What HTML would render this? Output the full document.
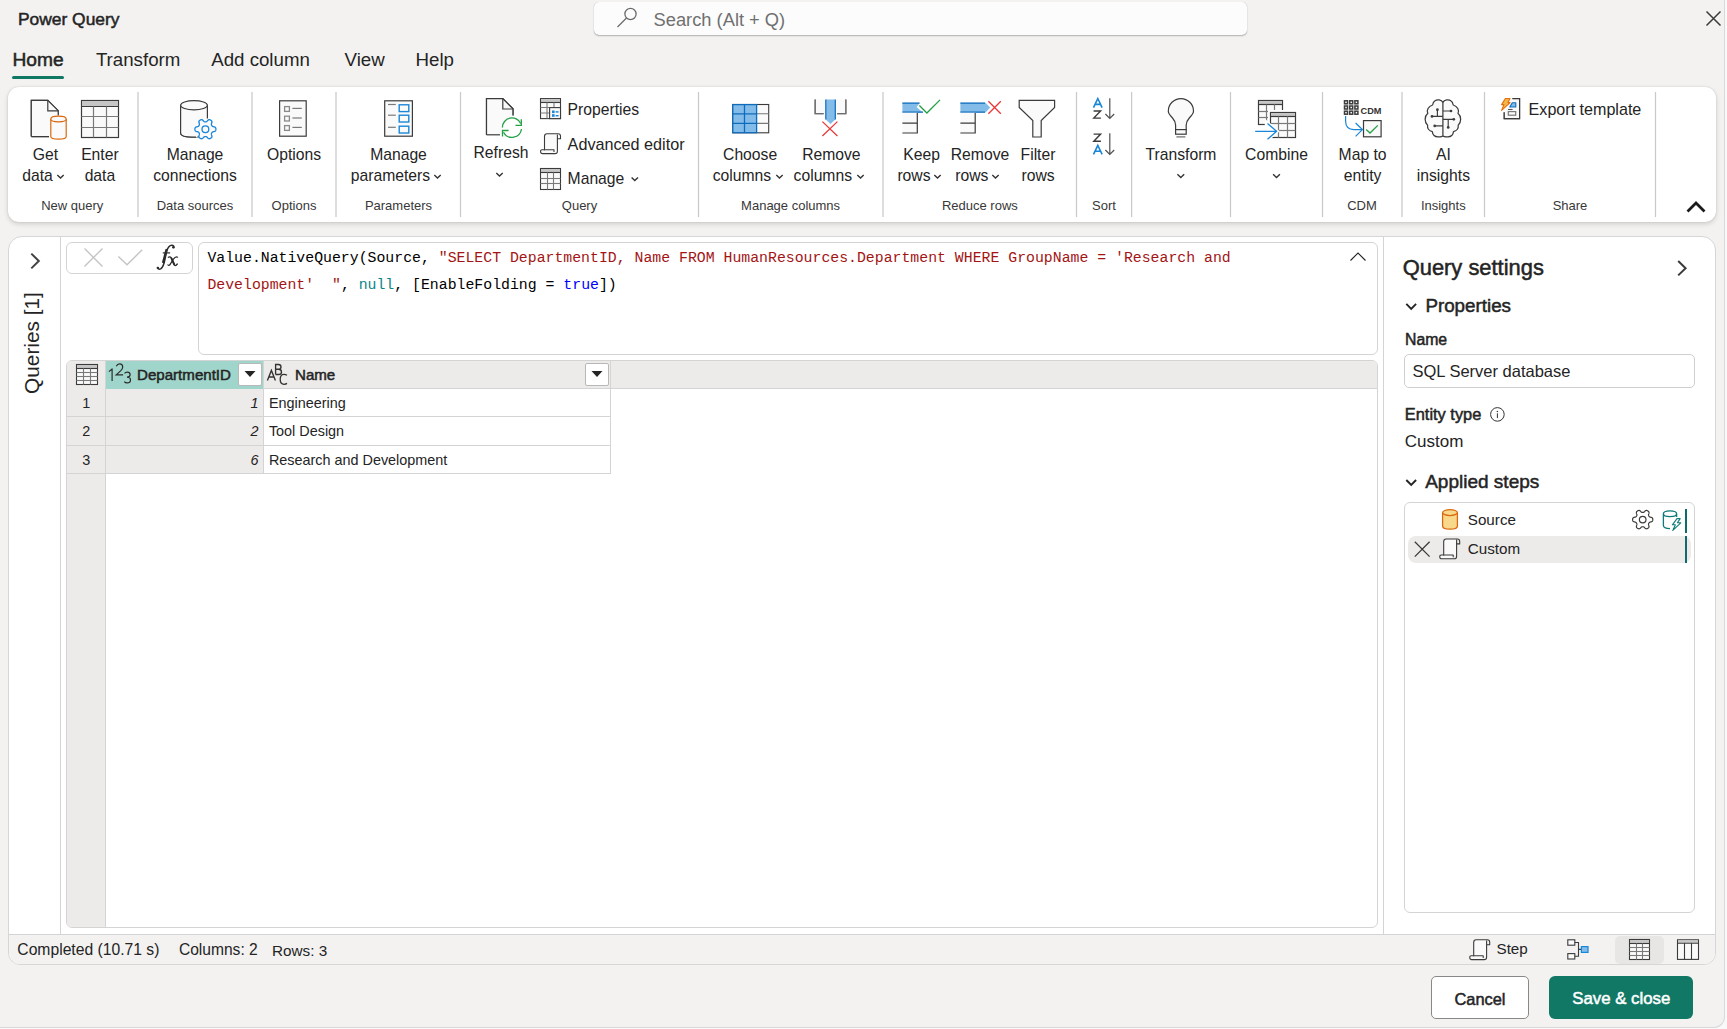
<!DOCTYPE html>
<html><head><meta charset="utf-8"><title>Power Query</title>
<style>
html,body{margin:0;padding:0;}
body{width:1727px;height:1029px;overflow:hidden;position:relative;background:#f3f2f1;font-family:'Liberation Sans', sans-serif;}
.t{position:absolute;white-space:nowrap;line-height:0;}
svg.ov{position:absolute;left:0;top:0;}
</style></head><body>
<div style="position:absolute;left:0px;top:0px;width:1727px;height:1029px;box-sizing:border-box;background:#f9f9f9"></div>
<div style="position:absolute;left:-20px;top:-20px;width:1745px;height:1048px;box-sizing:border-box;background:#f3f2f1;border-right:1px solid #d9d9d9;border-bottom:1px solid #d9d9d9;border-radius:0 0 11px 0"></div>
<div class="t" style="left:18.00px;top:19.07px;font-size:17.4px;font-weight:400;color:#242424;font-family:'Liberation Sans', sans-serif;-webkit-text-stroke:0.5px currentColor;">Power Query</div>
<div style="position:absolute;left:594px;top:2px;width:653px;height:33px;box-sizing:border-box;background:#fcfcfc;border-radius:5px;box-shadow:0 1px 1.5px rgba(0,0,0,0.28), 0 0 0.5px rgba(0,0,0,0.25)"></div>
<div class="t" style="left:653.60px;top:19.66px;font-size:18.3px;font-weight:400;color:#707070;font-family:'Liberation Sans', sans-serif;">Search (Alt + Q)</div>
<div class="t" style="left:12.50px;top:59.75px;font-size:19.2px;font-weight:400;color:#242424;font-family:'Liberation Sans', sans-serif;-webkit-text-stroke:0.5px currentColor;">Home</div>
<div style="position:absolute;left:12px;top:76px;width:52px;height:3px;box-sizing:border-box;background:#117865;border-radius:1.5px"></div>
<div class="t" style="left:95.90px;top:59.92px;font-size:18.7px;font-weight:400;color:#242424;font-family:'Liberation Sans', sans-serif;">Transform</div>
<div class="t" style="left:211.20px;top:59.92px;font-size:18.7px;font-weight:400;color:#242424;font-family:'Liberation Sans', sans-serif;">Add column</div>
<div class="t" style="left:344.60px;top:59.92px;font-size:18.7px;font-weight:400;color:#242424;font-family:'Liberation Sans', sans-serif;">View</div>
<div class="t" style="left:415.50px;top:59.92px;font-size:18.7px;font-weight:400;color:#242424;font-family:'Liberation Sans', sans-serif;">Help</div>
<div style="position:absolute;left:8px;top:87px;width:1708px;height:135px;box-sizing:border-box;background:#fff;border-radius:11px;box-shadow:0 2px 5px rgba(0,0,0,0.15), 0 0 1.5px rgba(0,0,0,0.16)"></div>
<div class="t" style="left:-254.50px;width:600px;text-align:center;top:154.56px;font-size:15.7px;font-weight:400;color:#242424;font-family:'Liberation Sans', sans-serif;">Get</div>
<div class="t" style="left:22.20px;top:175.56px;font-size:15.7px;font-weight:400;color:#242424;font-family:'Liberation Sans', sans-serif;">data</div>
<div class="t" style="left:-200.10px;width:600px;text-align:center;top:154.56px;font-size:15.7px;font-weight:400;color:#242424;font-family:'Liberation Sans', sans-serif;">Enter</div>
<div class="t" style="left:-200.10px;width:600px;text-align:center;top:175.56px;font-size:15.7px;font-weight:400;color:#242424;font-family:'Liberation Sans', sans-serif;">data</div>
<div class="t" style="left:-105.00px;width:600px;text-align:center;top:154.56px;font-size:15.7px;font-weight:400;color:#242424;font-family:'Liberation Sans', sans-serif;">Manage</div>
<div class="t" style="left:-105.00px;width:600px;text-align:center;top:175.56px;font-size:15.7px;font-weight:400;color:#242424;font-family:'Liberation Sans', sans-serif;">connections</div>
<div class="t" style="left:-6.00px;width:600px;text-align:center;top:154.56px;font-size:15.7px;font-weight:400;color:#242424;font-family:'Liberation Sans', sans-serif;">Options</div>
<div class="t" style="left:98.50px;width:600px;text-align:center;top:154.56px;font-size:15.7px;font-weight:400;color:#242424;font-family:'Liberation Sans', sans-serif;">Manage</div>
<div class="t" style="left:350.80px;top:175.56px;font-size:15.7px;font-weight:400;color:#242424;font-family:'Liberation Sans', sans-serif;">parameters</div>
<div class="t" style="left:201.00px;width:600px;text-align:center;top:152.56px;font-size:15.7px;font-weight:400;color:#242424;font-family:'Liberation Sans', sans-serif;">Refresh</div>
<div class="t" style="left:567.60px;top:109.56px;font-size:15.7px;font-weight:400;color:#242424;font-family:'Liberation Sans', sans-serif;">Properties</div>
<div class="t" style="left:567.60px;top:143.89px;font-size:16.2px;font-weight:400;color:#242424;font-family:'Liberation Sans', sans-serif;">Advanced editor</div>
<div class="t" style="left:567.60px;top:179.26px;font-size:15.7px;font-weight:400;color:#242424;font-family:'Liberation Sans', sans-serif;">Manage</div>
<div class="t" style="left:450.10px;width:600px;text-align:center;top:154.56px;font-size:15.7px;font-weight:400;color:#242424;font-family:'Liberation Sans', sans-serif;">Choose</div>
<div class="t" style="left:712.70px;top:175.56px;font-size:15.7px;font-weight:400;color:#242424;font-family:'Liberation Sans', sans-serif;">columns</div>
<div class="t" style="left:531.40px;width:600px;text-align:center;top:154.56px;font-size:15.7px;font-weight:400;color:#242424;font-family:'Liberation Sans', sans-serif;">Remove</div>
<div class="t" style="left:793.60px;top:175.56px;font-size:15.7px;font-weight:400;color:#242424;font-family:'Liberation Sans', sans-serif;">columns</div>
<div class="t" style="left:621.60px;width:600px;text-align:center;top:154.56px;font-size:15.7px;font-weight:400;color:#242424;font-family:'Liberation Sans', sans-serif;">Keep</div>
<div class="t" style="left:897.40px;top:175.56px;font-size:15.7px;font-weight:400;color:#242424;font-family:'Liberation Sans', sans-serif;">rows</div>
<div class="t" style="left:680.00px;width:600px;text-align:center;top:154.56px;font-size:15.7px;font-weight:400;color:#242424;font-family:'Liberation Sans', sans-serif;">Remove</div>
<div class="t" style="left:955.30px;top:175.56px;font-size:15.7px;font-weight:400;color:#242424;font-family:'Liberation Sans', sans-serif;">rows</div>
<div class="t" style="left:738.00px;width:600px;text-align:center;top:154.56px;font-size:15.7px;font-weight:400;color:#242424;font-family:'Liberation Sans', sans-serif;">Filter</div>
<div class="t" style="left:738.00px;width:600px;text-align:center;top:175.56px;font-size:15.7px;font-weight:400;color:#242424;font-family:'Liberation Sans', sans-serif;">rows</div>
<div class="t" style="left:881.00px;width:600px;text-align:center;top:154.56px;font-size:15.7px;font-weight:400;color:#242424;font-family:'Liberation Sans', sans-serif;">Transform</div>
<div class="t" style="left:976.50px;width:600px;text-align:center;top:154.56px;font-size:15.7px;font-weight:400;color:#242424;font-family:'Liberation Sans', sans-serif;">Combine</div>
<div class="t" style="left:1062.60px;width:600px;text-align:center;top:154.56px;font-size:15.7px;font-weight:400;color:#242424;font-family:'Liberation Sans', sans-serif;">Map to</div>
<div class="t" style="left:1062.60px;width:600px;text-align:center;top:175.56px;font-size:15.7px;font-weight:400;color:#242424;font-family:'Liberation Sans', sans-serif;">entity</div>
<div class="t" style="left:1143.40px;width:600px;text-align:center;top:154.56px;font-size:15.7px;font-weight:400;color:#242424;font-family:'Liberation Sans', sans-serif;">AI</div>
<div class="t" style="left:1143.40px;width:600px;text-align:center;top:175.56px;font-size:15.7px;font-weight:400;color:#242424;font-family:'Liberation Sans', sans-serif;">insights</div>
<div class="t" style="left:1528.60px;top:109.42px;font-size:16.1px;font-weight:400;color:#242424;font-family:'Liberation Sans', sans-serif;">Export template</div>
<div class="t" style="left:-227.80px;width:600px;text-align:center;top:205.90px;font-size:13px;font-weight:400;color:#383838;font-family:'Liberation Sans', sans-serif;">New query</div>
<div class="t" style="left:-105.00px;width:600px;text-align:center;top:205.90px;font-size:13px;font-weight:400;color:#383838;font-family:'Liberation Sans', sans-serif;">Data sources</div>
<div class="t" style="left:-6.00px;width:600px;text-align:center;top:205.90px;font-size:13px;font-weight:400;color:#383838;font-family:'Liberation Sans', sans-serif;">Options</div>
<div class="t" style="left:98.50px;width:600px;text-align:center;top:205.90px;font-size:13px;font-weight:400;color:#383838;font-family:'Liberation Sans', sans-serif;">Parameters</div>
<div class="t" style="left:279.50px;width:600px;text-align:center;top:205.90px;font-size:13px;font-weight:400;color:#383838;font-family:'Liberation Sans', sans-serif;">Query</div>
<div class="t" style="left:490.60px;width:600px;text-align:center;top:205.90px;font-size:13px;font-weight:400;color:#383838;font-family:'Liberation Sans', sans-serif;">Manage columns</div>
<div class="t" style="left:679.90px;width:600px;text-align:center;top:205.90px;font-size:13px;font-weight:400;color:#383838;font-family:'Liberation Sans', sans-serif;">Reduce rows</div>
<div class="t" style="left:804.00px;width:600px;text-align:center;top:205.90px;font-size:13px;font-weight:400;color:#383838;font-family:'Liberation Sans', sans-serif;">Sort</div>
<div class="t" style="left:1062.00px;width:600px;text-align:center;top:205.90px;font-size:13px;font-weight:400;color:#383838;font-family:'Liberation Sans', sans-serif;">CDM</div>
<div class="t" style="left:1143.30px;width:600px;text-align:center;top:205.90px;font-size:13px;font-weight:400;color:#383838;font-family:'Liberation Sans', sans-serif;">Insights</div>
<div class="t" style="left:1270.00px;width:600px;text-align:center;top:205.90px;font-size:13px;font-weight:400;color:#383838;font-family:'Liberation Sans', sans-serif;">Share</div>
<div style="position:absolute;left:8px;top:236px;width:1708px;height:729px;box-sizing:border-box;background:#fff;border:1px solid #d6d6d6;border-radius:14px 14px 12px 12px"></div>
<div style="position:absolute;left:9px;top:934px;width:1706px;height:30px;box-sizing:border-box;background:#f3f2f1;border-top:1px solid #d4d4d4;border-radius:0 0 11px 11px"></div>
<div class="t" style="left:-19px;top:331px;width:102px;font-size:20.8px;color:#242424;transform:rotate(-90deg);transform-origin:center;text-align:center;line-height:24px;height:24px;">Queries [1]</div>
<div style="position:absolute;left:66px;top:242px;width:127px;height:32px;box-sizing:border-box;background:#fff;border:1px solid #d4d4d4;border-radius:6px"></div>
<div style="position:absolute;left:198px;top:242px;width:1180px;height:113px;box-sizing:border-box;background:#fff;border:1px solid #d4d4d4;border-radius:6px"></div>
<div class="t" style="left:207.40px;top:258.35px;font-size:14.84px;font-weight:400;color:#000;font-family:'Liberation Mono', monospace;">Value.NativeQuery(Source, <span style="color:#a31515">"SELECT DepartmentID, Name FROM HumanResources.Department WHERE GroupName = 'Research and</span></div>
<div class="t" style="left:207.40px;top:285.05px;font-size:14.84px;font-weight:400;color:#000;font-family:'Liberation Mono', monospace;"><span style="color:#a31515">Development'&nbsp;&nbsp;"</span>, <span style="color:#09858a">null</span>, [EnableFolding = <span style="color:#0000ff">true</span>])</div>
<div style="position:absolute;left:66px;top:360px;width:1312px;height:568px;box-sizing:border-box;background:#fff;border:1px solid #d4d4d4;border-radius:6px;overflow:hidden"></div>
<div style="position:absolute;left:67px;top:361px;width:1310px;height:28px;box-sizing:border-box;background:#edebe9;border-bottom:1px solid #d4d4d4;border-radius:5px 5px 0 0"></div>
<div style="position:absolute;left:67px;top:361px;width:39px;height:566px;box-sizing:border-box;background:#edebe9;border-right:1px solid #d4d4d4;border-radius:5px 0 0 5px"></div>
<div style="position:absolute;left:106px;top:361px;width:157px;height:28px;box-sizing:border-box;background:#a0d5cb"></div>
<div style="position:absolute;left:106px;top:389px;width:158px;height:85px;box-sizing:border-box;background:#edebe9"></div>
<div style="position:absolute;left:67px;top:416px;width:544px;height:1px;box-sizing:border-box;background:#d4d4d4"></div>
<div style="position:absolute;left:67px;top:445px;width:544px;height:1px;box-sizing:border-box;background:#d4d4d4"></div>
<div style="position:absolute;left:67px;top:473px;width:544px;height:1px;box-sizing:border-box;background:#d4d4d4"></div>
<div style="position:absolute;left:263px;top:361px;width:1px;height:113px;box-sizing:border-box;background:#d4d4d4"></div>
<div style="position:absolute;left:610px;top:361px;width:1px;height:113px;box-sizing:border-box;background:#d4d4d4"></div>
<div style="position:absolute;left:238px;top:363px;width:24px;height:23px;box-sizing:border-box;background:#fff;border:1px solid #b8b8b8;border-radius:2px"></div>
<div style="position:absolute;left:585px;top:363px;width:24px;height:23px;box-sizing:border-box;background:#fff;border:1px solid #b8b8b8;border-radius:2px"></div>
<div class="t" style="left:137.00px;top:375.27px;font-size:15.1px;font-weight:400;color:#242424;font-family:'Liberation Sans', sans-serif;-webkit-text-stroke:0.5px currentColor;">DepartmentID</div>
<div class="t" style="left:295.00px;top:375.27px;font-size:15.1px;font-weight:400;color:#242424;font-family:'Liberation Sans', sans-serif;-webkit-text-stroke:0.5px currentColor;">Name</div>
<div class="t" style="left:-213.70px;width:600px;text-align:center;top:402.71px;font-size:14.4px;font-weight:400;color:#242424;font-family:'Liberation Sans', sans-serif;">1</div>
<div class="t" style="left:-341.40px;width:600px;text-align:right;top:402.71px;font-size:14.4px;font-weight:400;color:#242424;font-family:'Liberation Sans', sans-serif;font-style:italic">1</div>
<div class="t" style="left:268.90px;top:402.71px;font-size:14.4px;font-weight:400;color:#242424;font-family:'Liberation Sans', sans-serif;">Engineering</div>
<div class="t" style="left:-213.70px;width:600px;text-align:center;top:431.41px;font-size:14.4px;font-weight:400;color:#242424;font-family:'Liberation Sans', sans-serif;">2</div>
<div class="t" style="left:-341.40px;width:600px;text-align:right;top:431.41px;font-size:14.4px;font-weight:400;color:#242424;font-family:'Liberation Sans', sans-serif;font-style:italic">2</div>
<div class="t" style="left:268.90px;top:431.41px;font-size:14.4px;font-weight:400;color:#242424;font-family:'Liberation Sans', sans-serif;">Tool Design</div>
<div class="t" style="left:-213.70px;width:600px;text-align:center;top:460.11px;font-size:14.4px;font-weight:400;color:#242424;font-family:'Liberation Sans', sans-serif;">3</div>
<div class="t" style="left:-341.40px;width:600px;text-align:right;top:460.11px;font-size:14.4px;font-weight:400;color:#242424;font-family:'Liberation Sans', sans-serif;font-style:italic">6</div>
<div class="t" style="left:268.90px;top:460.11px;font-size:14.4px;font-weight:400;color:#242424;font-family:'Liberation Sans', sans-serif;">Research and Development</div>
<div class="t" style="left:17.30px;top:950.46px;font-size:15.7px;font-weight:400;color:#242424;font-family:'Liberation Sans', sans-serif;">Completed (10.71 s)</div>
<div class="t" style="left:178.90px;top:950.49px;font-size:15.6px;font-weight:400;color:#242424;font-family:'Liberation Sans', sans-serif;">Columns: 2</div>
<div class="t" style="left:272.00px;top:950.60px;font-size:15.3px;font-weight:400;color:#242424;font-family:'Liberation Sans', sans-serif;">Rows: 3</div>
<div class="t" style="left:1496.50px;top:949.43px;font-size:15.2px;font-weight:400;color:#242424;font-family:'Liberation Sans', sans-serif;">Step</div>
<div style="position:absolute;left:1615px;top:936px;width:49px;height:28px;box-sizing:border-box;background:#e8e6e4;border-radius:5px"></div>
<div class="t" style="left:1402.70px;top:267.91px;font-size:21.9px;font-weight:400;color:#242424;font-family:'Liberation Sans', sans-serif;-webkit-text-stroke:0.5px currentColor;">Query settings</div>
<div class="t" style="left:1425.40px;top:306.19px;font-size:18.8px;font-weight:400;color:#242424;font-family:'Liberation Sans', sans-serif;-webkit-text-stroke:0.5px currentColor;">Properties</div>
<div class="t" style="left:1405.00px;top:340.33px;font-size:15.8px;font-weight:400;color:#242424;font-family:'Liberation Sans', sans-serif;-webkit-text-stroke:0.5px currentColor;">Name</div>
<div style="position:absolute;left:1404px;top:354px;width:291px;height:34px;box-sizing:border-box;background:#fff;border:1px solid #cfcfcf;border-radius:5px"></div>
<div class="t" style="left:1412.40px;top:370.98px;font-size:16.5px;font-weight:400;color:#242424;font-family:'Liberation Sans', sans-serif;">SQL Server database</div>
<div class="t" style="left:1404.80px;top:414.32px;font-size:16.4px;font-weight:400;color:#242424;font-family:'Liberation Sans', sans-serif;-webkit-text-stroke:0.5px currentColor;">Entity type</div>
<div class="t" style="left:1404.80px;top:441.91px;font-size:17px;font-weight:400;color:#242424;font-family:'Liberation Sans', sans-serif;">Custom</div>
<div class="t" style="left:1425.20px;top:481.92px;font-size:19px;font-weight:400;color:#242424;font-family:'Liberation Sans', sans-serif;-webkit-text-stroke:0.5px currentColor;">Applied steps</div>
<div style="position:absolute;left:1404px;top:502px;width:291px;height:411px;box-sizing:border-box;background:#fff;border:1px solid #d4d4d4;border-radius:6px"></div>
<div style="position:absolute;left:1407.5px;top:536px;width:283px;height:27px;box-sizing:border-box;background:#edebe9;border-radius:8px"></div>
<div class="t" style="left:1467.80px;top:519.93px;font-size:15.2px;font-weight:400;color:#242424;font-family:'Liberation Sans', sans-serif;">Source</div>
<div class="t" style="left:1467.80px;top:549.33px;font-size:15.2px;font-weight:400;color:#242424;font-family:'Liberation Sans', sans-serif;">Custom</div>
<div style="position:absolute;left:1684.7px;top:509px;width:2.6px;height:24px;box-sizing:border-box;background:#0f6b6b"></div>
<div style="position:absolute;left:1684.7px;top:536px;width:2.6px;height:27px;box-sizing:border-box;background:#0f6b6b"></div>
<div style="position:absolute;left:1431px;top:976px;width:98px;height:43px;box-sizing:border-box;background:#fff;border:1px solid #8a8886;border-radius:5px"></div>
<div class="t" style="left:1180.00px;width:600px;text-align:center;top:998.82px;font-size:16.4px;font-weight:400;color:#242424;font-family:'Liberation Sans', sans-serif;-webkit-text-stroke:0.5px currentColor;">Cancel</div>
<div style="position:absolute;left:1549px;top:976px;width:144px;height:43px;box-sizing:border-box;background:#117865;border-radius:6px"></div>
<div class="t" style="left:1321.30px;width:600px;text-align:center;top:998.68px;font-size:16.8px;font-weight:400;color:#fff;font-family:'Liberation Sans', sans-serif;-webkit-text-stroke:0.5px currentColor;">Save &amp; close</div>
<svg class="ov" width="1727" height="1029" viewBox="0 0 1727 1029">
<circle cx="630.5" cy="14" r="5.6" fill="none" stroke="#6b6b6b" stroke-width="1.3"/><line x1="626.5" y1="18" x2="617.5" y2="27" stroke="#6b6b6b" stroke-width="1.3"/>
<path d="M1706.5 11.5 L1720.5 25.5 M1720.5 11.5 L1706.5 25.5" stroke="#3b3b3b" stroke-width="1.5"/>
<line x1="138" y1="92" x2="138" y2="217" stroke="#c9c9c9" stroke-width="1.25"/>
<line x1="252" y1="92" x2="252" y2="217" stroke="#c9c9c9" stroke-width="1.25"/>
<line x1="336" y1="92" x2="336" y2="217" stroke="#c9c9c9" stroke-width="1.25"/>
<line x1="460.5" y1="92" x2="460.5" y2="217" stroke="#c9c9c9" stroke-width="1.25"/>
<line x1="698.5" y1="92" x2="698.5" y2="217" stroke="#c9c9c9" stroke-width="1.25"/>
<line x1="883" y1="92" x2="883" y2="217" stroke="#c9c9c9" stroke-width="1.25"/>
<line x1="1076.5" y1="92" x2="1076.5" y2="217" stroke="#c9c9c9" stroke-width="1.25"/>
<line x1="1131.6" y1="92" x2="1131.6" y2="217" stroke="#c9c9c9" stroke-width="1.25"/>
<line x1="1230.5" y1="92" x2="1230.5" y2="217" stroke="#c9c9c9" stroke-width="1.25"/>
<line x1="1322.5" y1="92" x2="1322.5" y2="217" stroke="#c9c9c9" stroke-width="1.25"/>
<line x1="1402" y1="92" x2="1402" y2="217" stroke="#c9c9c9" stroke-width="1.25"/>
<line x1="1484.5" y1="92" x2="1484.5" y2="217" stroke="#c9c9c9" stroke-width="1.25"/>
<line x1="1655.5" y1="92" x2="1655.5" y2="217" stroke="#c9c9c9" stroke-width="1.25"/>
<path d="M57.3 174.9 L60.5 178.1 L63.7 174.9" fill="none" stroke="#333" stroke-width="1.35"/>
<path d="M434.3 174.9 L437.5 178.1 L440.7 174.9" fill="none" stroke="#333" stroke-width="1.35"/>
<path d="M496.3 172.9 L499.5 176.1 L502.7 172.9" fill="none" stroke="#333" stroke-width="1.35"/>
<path d="M631.5999999999999 177.4 L634.8 180.6 L638.0 177.4" fill="none" stroke="#333" stroke-width="1.35"/>
<path d="M776.3 174.9 L779.5 178.1 L782.7 174.9" fill="none" stroke="#333" stroke-width="1.35"/>
<path d="M857.3 174.9 L860.5 178.1 L863.7 174.9" fill="none" stroke="#333" stroke-width="1.35"/>
<path d="M934.3 174.9 L937.5 178.1 L940.7 174.9" fill="none" stroke="#333" stroke-width="1.35"/>
<path d="M992.3 174.9 L995.5 178.1 L998.7 174.9" fill="none" stroke="#333" stroke-width="1.35"/>
<path d="M1177.3999999999999 174.20000000000002 L1180.8 177.6 L1184.2 174.20000000000002" fill="none" stroke="#333" stroke-width="1.35"/>
<path d="M1273.1 174.20000000000002 L1276.5 177.6 L1279.9 174.20000000000002" fill="none" stroke="#333" stroke-width="1.35"/>
<path d="M1687.5 211.5 L1696 203 L1704.5 211.5" fill="none" stroke="#1b1b1b" stroke-width="2.8"/>
<line x1="60.5" y1="237" x2="60.5" y2="934" stroke="#d4d4d4" stroke-width="1"/>
<line x1="1383.5" y1="237" x2="1383.5" y2="934" stroke="#d4d4d4" stroke-width="1"/>
<path d="M31.3 253.6 L38.8 261 L31.3 268.4" fill="none" stroke="#424242" stroke-width="2"/>
<path d="M84.5 248.5 L102.5 266.5 M102.5 248.5 L84.5 266.5" stroke="#c4c4c4" stroke-width="1.4"/>
<path d="M118.4 256.6 L127 264.8 L142.2 249.8" fill="none" stroke="#c4c4c4" stroke-width="1.4"/>
<path d="M1350.5 260.5 L1358 253 L1365.5 260.5" fill="none" stroke="#242424" stroke-width="1.1"/>
<path d="M244.5 371 L255.5 371 L250 377 Z" fill="#242424"/>
<path d="M591.5 371 L602.5 371 L597 377 Z" fill="#242424"/>
<path d="M1678.2 261 L1685.6 268.2 L1678.2 275.4" fill="none" stroke="#3b3b3b" stroke-width="2"/>
<path d="M1406.3 303.8 L1411.2 308.8 L1416.1 303.8" fill="none" stroke="#242424" stroke-width="1.9"/>
<circle cx="1497.4" cy="414.4" r="6.8" fill="none" stroke="#333" stroke-width="1"/><line x1="1497.4" y1="413.3" x2="1497.4" y2="418.1" stroke="#333" stroke-width="1"/><circle cx="1497.4" cy="411.6" r="0.75" fill="#333"/>
<path d="M1406.3 480 L1411.2 485 L1416.1 480" fill="none" stroke="#242424" stroke-width="1.9"/>
<path d="M31.3 136.6 V100.3 H47.8 L58.2 110.7 V115.5" fill="#fafafa" stroke="#3b3b3b" stroke-width="1.2"/>
<path d="M31.3 136.6 H49" fill="none" stroke="#3b3b3b" stroke-width="1.2"/>
<path d="M31.3 100.3 H47.8 L58.2 110.7 V115 H50 V136.6 H31.3 Z" fill="#fafafa" stroke="none"/>
<path d="M31.3 136.6 V100.3 H47.8 L58.2 110.7 V115" fill="none" stroke="#3b3b3b" stroke-width="1.2"/>
<path d="M31.3 136.6 H49" stroke="#3b3b3b" stroke-width="1.2"/>
<path d="M47.8 100.6 V110.8 H58" fill="none" stroke="#3b3b3b" stroke-width="1.2"/>
<path d="M50.8 119 V136.5 Q50.8 139.2 58.5 139.2 Q66.2 139.2 66.2 136.5 V119" fill="#fafafa" stroke="#d9690f" stroke-width="1.2"/>
<ellipse cx="58.5" cy="119" rx="7.7" ry="2.8" fill="#fafafa" stroke="#d9690f" stroke-width="1.2"/>
<rect x="81.5" y="100.5" width="37" height="37" fill="#fafafa" stroke="#3b3b3b" stroke-width="1.2"/>
<rect x="82.0" y="101.0" width="36" height="5" fill="#c6c6c6"/>
<line x1="81.5" y1="106.5" x2="118.5" y2="106.5" stroke="#3b3b3b" stroke-width="1.2"/>
<line x1="93.5" y1="106.5" x2="93.5" y2="137.5" stroke="#7a7a7a" stroke-width="1.2"/>
<line x1="106.5" y1="106.5" x2="106.5" y2="137.5" stroke="#7a7a7a" stroke-width="1.2"/>
<line x1="81.5" y1="116.5" x2="118.5" y2="116.5" stroke="#7a7a7a" stroke-width="1.2"/>
<line x1="81.5" y1="127.5" x2="118.5" y2="127.5" stroke="#7a7a7a" stroke-width="1.2"/>
<path d="M180.6 105.2 V133 Q180.6 137 194 137 Q200 137 202 136.5" fill="#fafafa" stroke="#3b3b3b" stroke-width="1.2"/>
<path d="M180.6 105.2 V133 Q180.6 137 194 137 H197 L207.4 119 V105.2 Z" fill="#fafafa"/>
<path d="M180.6 105.2 V133 Q180.6 137.2 192 137.2 H196" fill="none" stroke="#3b3b3b" stroke-width="1.2"/>
<path d="M207.4 105.2 V118.6" fill="none" stroke="#3b3b3b" stroke-width="1.2"/>
<ellipse cx="194" cy="105.2" rx="13.4" ry="4.6" fill="#fafafa" stroke="#3b3b3b" stroke-width="1.2"/>
<path d="M215.89 129.20 L215.88 129.38 L215.87 129.57 L215.85 129.75 L215.83 129.93 L215.79 130.11 L215.74 130.29 L215.67 130.46 L215.59 130.63 L215.48 130.80 L215.35 130.95 L215.18 131.10 L214.97 131.23 L214.72 131.35 L214.44 131.45 L214.13 131.54 L213.81 131.61 L213.51 131.68 L213.23 131.74 L212.99 131.81 L212.78 131.89 L212.60 131.97 L212.46 132.05 L212.33 132.14 L212.23 132.24 L212.14 132.34 L212.05 132.44 L211.98 132.55 L211.90 132.66 L211.84 132.77 L211.77 132.88 L211.71 132.99 L211.65 133.10 L211.59 133.22 L211.54 133.34 L211.49 133.46 L211.45 133.59 L211.42 133.73 L211.40 133.89 L211.40 134.06 L211.41 134.25 L211.45 134.46 L211.52 134.71 L211.60 134.98 L211.70 135.28 L211.79 135.59 L211.87 135.90 L211.92 136.19 L211.95 136.47 L211.93 136.72 L211.89 136.94 L211.82 137.13 L211.74 137.31 L211.63 137.47 L211.51 137.61 L211.38 137.74 L211.24 137.86 L211.10 137.98 L210.95 138.09 L210.80 138.19 L210.64 138.28 L210.48 138.37 L210.32 138.45 L210.15 138.53 L209.98 138.59 L209.81 138.65 L209.63 138.70 L209.44 138.73 L209.25 138.74 L209.06 138.73 L208.85 138.69 L208.64 138.62 L208.42 138.50 L208.20 138.35 L207.97 138.15 L207.74 137.93 L207.52 137.69 L207.31 137.46 L207.11 137.25 L206.93 137.08 L206.76 136.93 L206.61 136.82 L206.46 136.74 L206.32 136.68 L206.18 136.63 L206.05 136.60 L205.92 136.58 L205.79 136.57 L205.66 136.56 L205.53 136.56 L205.40 136.56 L205.27 136.56 L205.14 136.56 L205.01 136.57 L204.88 136.58 L204.75 136.60 L204.62 136.63 L204.48 136.68 L204.34 136.74 L204.19 136.82 L204.04 136.93 L203.87 137.08 L203.69 137.25 L203.49 137.46 L203.28 137.69 L203.06 137.93 L202.83 138.15 L202.60 138.35 L202.38 138.50 L202.16 138.62 L201.95 138.69 L201.74 138.73 L201.55 138.74 L201.36 138.73 L201.17 138.70 L200.99 138.65 L200.82 138.59 L200.65 138.53 L200.48 138.45 L200.32 138.37 L200.16 138.28 L200.00 138.19 L199.85 138.09 L199.70 137.98 L199.56 137.86 L199.42 137.74 L199.29 137.61 L199.17 137.47 L199.06 137.31 L198.98 137.13 L198.91 136.94 L198.87 136.72 L198.85 136.47 L198.88 136.19 L198.93 135.90 L199.01 135.59 L199.10 135.28 L199.20 134.98 L199.28 134.71 L199.35 134.46 L199.39 134.25 L199.40 134.06 L199.40 133.89 L199.38 133.73 L199.35 133.59 L199.31 133.46 L199.26 133.34 L199.21 133.22 L199.15 133.10 L199.09 132.99 L199.03 132.88 L198.96 132.77 L198.90 132.66 L198.82 132.55 L198.75 132.44 L198.66 132.34 L198.57 132.24 L198.47 132.14 L198.34 132.05 L198.20 131.97 L198.02 131.89 L197.81 131.81 L197.57 131.74 L197.29 131.68 L196.99 131.61 L196.67 131.54 L196.36 131.45 L196.08 131.35 L195.83 131.23 L195.62 131.10 L195.45 130.95 L195.32 130.80 L195.21 130.63 L195.13 130.46 L195.06 130.29 L195.01 130.11 L194.97 129.93 L194.95 129.75 L194.93 129.57 L194.92 129.38 L194.91 129.20 L194.92 129.02 L194.93 128.83 L194.95 128.65 L194.97 128.47 L195.01 128.29 L195.06 128.11 L195.13 127.94 L195.21 127.77 L195.32 127.60 L195.45 127.45 L195.62 127.30 L195.83 127.17 L196.08 127.05 L196.36 126.95 L196.67 126.86 L196.99 126.79 L197.29 126.72 L197.57 126.66 L197.81 126.59 L198.02 126.51 L198.20 126.43 L198.34 126.35 L198.47 126.26 L198.57 126.16 L198.66 126.06 L198.75 125.96 L198.82 125.85 L198.90 125.74 L198.96 125.63 L199.03 125.52 L199.09 125.41 L199.15 125.30 L199.21 125.18 L199.26 125.06 L199.31 124.94 L199.35 124.81 L199.38 124.67 L199.40 124.51 L199.40 124.34 L199.39 124.15 L199.35 123.94 L199.28 123.69 L199.20 123.42 L199.10 123.12 L199.01 122.81 L198.93 122.50 L198.88 122.21 L198.85 121.93 L198.87 121.68 L198.91 121.46 L198.98 121.27 L199.06 121.09 L199.17 120.93 L199.29 120.79 L199.42 120.66 L199.56 120.54 L199.70 120.42 L199.85 120.31 L200.00 120.21 L200.16 120.12 L200.32 120.03 L200.48 119.95 L200.65 119.87 L200.82 119.81 L200.99 119.75 L201.17 119.70 L201.36 119.67 L201.55 119.66 L201.74 119.67 L201.95 119.71 L202.16 119.78 L202.38 119.90 L202.60 120.05 L202.83 120.25 L203.06 120.47 L203.28 120.71 L203.49 120.94 L203.69 121.15 L203.87 121.32 L204.04 121.47 L204.19 121.58 L204.34 121.66 L204.48 121.72 L204.62 121.77 L204.75 121.80 L204.88 121.82 L205.01 121.83 L205.14 121.84 L205.27 121.84 L205.40 121.84 L205.53 121.84 L205.66 121.84 L205.79 121.83 L205.92 121.82 L206.05 121.80 L206.18 121.77 L206.32 121.72 L206.46 121.66 L206.61 121.58 L206.76 121.47 L206.93 121.32 L207.11 121.15 L207.31 120.94 L207.52 120.71 L207.74 120.47 L207.97 120.25 L208.20 120.05 L208.42 119.90 L208.64 119.78 L208.85 119.71 L209.06 119.67 L209.25 119.66 L209.44 119.67 L209.63 119.70 L209.81 119.75 L209.98 119.81 L210.15 119.87 L210.32 119.95 L210.48 120.03 L210.64 120.12 L210.80 120.21 L210.95 120.31 L211.10 120.42 L211.24 120.54 L211.38 120.66 L211.51 120.79 L211.63 120.93 L211.74 121.09 L211.82 121.27 L211.89 121.46 L211.93 121.68 L211.95 121.93 L211.92 122.21 L211.87 122.50 L211.79 122.81 L211.70 123.12 L211.60 123.42 L211.52 123.69 L211.45 123.94 L211.41 124.15 L211.40 124.34 L211.40 124.51 L211.42 124.67 L211.45 124.81 L211.49 124.94 L211.54 125.06 L211.59 125.18 L211.65 125.30 L211.71 125.41 L211.77 125.52 L211.84 125.63 L211.90 125.74 L211.98 125.85 L212.05 125.96 L212.14 126.06 L212.23 126.16 L212.33 126.26 L212.46 126.35 L212.60 126.43 L212.78 126.51 L212.99 126.59 L213.23 126.66 L213.51 126.72 L213.81 126.79 L214.13 126.86 L214.44 126.95 L214.72 127.05 L214.97 127.17 L215.18 127.30 L215.35 127.45 L215.48 127.60 L215.59 127.77 L215.67 127.94 L215.74 128.11 L215.79 128.29 L215.83 128.47 L215.85 128.65 L215.87 128.83 L215.88 129.02 Z" fill="#fafafa" stroke="#1a86d8" stroke-width="1.3" stroke-linejoin="round"/>
<circle cx="205.4" cy="129.2" r="3.4" fill="none" stroke="#1a86d8" stroke-width="1.3"/>
<rect x="279.6" y="100.8" width="26.6" height="35.4" fill="#fafafa" stroke="#3b3b3b" stroke-width="1.2"/>
<rect x="284.6" y="106.6" width="4.8" height="4.8" fill="none" stroke="#8a8a8a" stroke-width="1.3"/>
<line x1="292.4" y1="108.4" x2="301.8" y2="108.4" stroke="#7a7a7a" stroke-width="1.2"/>
<rect x="284.6" y="116.19999999999999" width="4.8" height="4.8" fill="none" stroke="#8a8a8a" stroke-width="1.3"/>
<line x1="292.4" y1="118.0" x2="301.8" y2="118.0" stroke="#7a7a7a" stroke-width="1.2"/>
<rect x="284.6" y="125.6" width="4.8" height="4.8" fill="none" stroke="#8a8a8a" stroke-width="1.3"/>
<line x1="292.4" y1="127.4" x2="301.8" y2="127.4" stroke="#7a7a7a" stroke-width="1.2"/>
<rect x="384.7" y="100.8" width="27.7" height="35.4" fill="#fafafa" stroke="#3b3b3b" stroke-width="1.2"/>
<line x1="388" y1="104.5" x2="395.8" y2="104.5" stroke="#7a7a7a" stroke-width="1.2"/>
<rect x="399.2" y="104.8" width="9.6" height="6.8" fill="none" stroke="#1a86d8" stroke-width="1.4"/>
<line x1="388" y1="115.2" x2="395.8" y2="115.2" stroke="#7a7a7a" stroke-width="1.2"/>
<rect x="399.2" y="115.2" width="9.6" height="6.8" fill="none" stroke="#1a86d8" stroke-width="1.4"/>
<line x1="388" y1="127.3" x2="395.8" y2="127.3" stroke="#7a7a7a" stroke-width="1.2"/>
<rect x="399.2" y="126.2" width="9.6" height="6.8" fill="none" stroke="#1a86d8" stroke-width="1.4"/>
<path d="M486.5 134.8 V98.6 H502.8 L513 108.8 V115.4" fill="none" stroke="#3b3b3b" stroke-width="1.2"/>
<path d="M487 99 H502.8 L512.5 109 V116 Q503 118 501 134.5 H487 Z" fill="#fafafa"/>
<path d="M486.5 134.8 V98.6 H502.8 L513 108.8 V115.4" fill="none" stroke="#3b3b3b" stroke-width="1.2"/>
<path d="M486.5 134.8 H500" stroke="#3b3b3b" stroke-width="1.2"/>
<path d="M502.8 98.8 V109 H512.8" fill="none" stroke="#3b3b3b" stroke-width="1.2"/>
<path d="M502.4 127.5 A9.6 9.6 0 0 1 520.7 123.5" fill="none" stroke="#22a043" stroke-width="1.3"/>
<path d="M521.5 129 A9.6 9.6 0 0 1 503.5 132.2" fill="none" stroke="#22a043" stroke-width="1.3"/>
<path d="M521.3 119.3 V125.4 H515.5" fill="none" stroke="#22a043" stroke-width="1.3"/>
<path d="M508.6 130.5 H502.5 V136.5" fill="none" stroke="#22a043" stroke-width="1.3"/>
<rect x="540.5" y="98.6" width="20" height="20" fill="#fafafa" stroke="#3b3b3b" stroke-width="1.1"/>
<rect x="541" y="99.1" width="19" height="3" fill="#c6c6c6"/>
<line x1="540.5" y1="102.5" x2="560.5" y2="102.5" stroke="#3b3b3b" stroke-width="1.1"/>
<path d="M547 102.5 V118.6 M540.5 107.5 H549 M540.5 113 H549 M554 102.5 V107.5" stroke="#7a7a7a" stroke-width="1.1" fill="none"/>
<rect x="549.6" y="107.6" width="10.9" height="11" fill="#fafafa" stroke="#3b3b3b" stroke-width="1.1"/>
<rect x="552" y="110.5" width="2.6" height="2.6" fill="#1a86d8"/><rect x="552" y="114.2" width="2.6" height="2.6" fill="#1a86d8"/>
<rect x="555.6" y="111.2" width="3" height="1.4" fill="#1a86d8"/><rect x="555.6" y="115" width="3" height="1.4" fill="#1a86d8"/>
<g transform="translate(540 133.2) scale(1.0)" fill="none" stroke="#3b3b3b" stroke-width="1.10" stroke-linejoin="round"><path d="M4.5 17 V3.2 Q4.5 0.6 7 0.6 H17.4 V17 Z" fill="#fafafa" stroke="none"/><path d="M1 17 H14 V18.8 Q14 20.2 12.6 20.2 H2.5 Q1 20.2 1 18.6 Z" fill="#fafafa" stroke="none"/><path d="M4.5 17 V3.2 Q4.5 0.6 7 0.6 H18.2 Q20.5 0.6 20.5 3 V5.5 H17.4"/><path d="M17.4 1.2 V18 Q17.4 20.4 15 20.4 H2.5 Q0.6 20.4 0.6 18.6 V17.6 Q0.6 16.6 2 16.6 H14 V18.8"/></g>
<rect x="540.5" y="168.5" width="20" height="21" fill="#fafafa" stroke="#3b3b3b" stroke-width="1.1"/>
<rect x="541.0" y="169.0" width="19" height="3" fill="#c6c6c6"/>
<line x1="540.5" y1="172.5" x2="560.5" y2="172.5" stroke="#3b3b3b" stroke-width="1.1"/>
<line x1="547.5" y1="172.5" x2="547.5" y2="189.5" stroke="#7a7a7a" stroke-width="1.1"/>
<line x1="553.5" y1="172.5" x2="553.5" y2="189.5" stroke="#7a7a7a" stroke-width="1.1"/>
<line x1="540.5" y1="178.5" x2="560.5" y2="178.5" stroke="#7a7a7a" stroke-width="1.1"/>
<line x1="540.5" y1="183.5" x2="560.5" y2="183.5" stroke="#7a7a7a" stroke-width="1.1"/>
<rect x="732.7" y="104.5" width="36" height="28.3" fill="#fafafa" stroke="#3b3b3b" stroke-width="1.1"/>
<path d="M756.6 113.8 H768.7 M756.6 123.4 H768.7" stroke="#7a7a7a" stroke-width="1.1"/>
<rect x="732.8" y="104.6" width="23.8" height="28.1" fill="#83bce9" stroke="#0f6cbd" stroke-width="1.3"/>
<path d="M744.5 104.6 V132.7 M732.8 113.8 H756.6 M732.8 123.4 H756.6" stroke="#0f6cbd" stroke-width="1.3"/>
<path d="M815.2 99.4 V113.6 H823.6 M837.2 113.6 H845.8 V99.4" fill="none" stroke="#6e6e6e" stroke-width="1.3"/>
<rect x="815.8" y="99.4" width="9.4" height="13.6" fill="#fafafa"/><rect x="836" y="99.4" width="9.4" height="13.6" fill="#fafafa"/>
<path d="M815.2 99.4 V113.6 H823.6 M837.2 113.6 H845.8 V99.4" fill="none" stroke="#6e6e6e" stroke-width="1.3"/>
<path d="M825.8 99.4 V119.6 L830.5 124 L835.3 119.6 V99.4 Z" fill="#83bce9"/>
<path d="M825.8 99.4 V119.4 M835.3 99.4 V119.4" stroke="#0f6cbd" stroke-width="1.2"/>
<path d="M822.4 121.6 L837.4 136 M837.4 121.6 L822.4 136" stroke="#e8393a" stroke-width="1.3"/>
<path d="M902.4 102.8 H920 L916.5 107 L922.8 112.6 H902.4 Z" fill="#83bce9"/>
<path d="M902.4 103.2 H919.5 M902.4 112.2 H923" stroke="#0f6cbd" stroke-width="1.3"/>
<path d="M902.4 112.8 H917.3 V133.2 H902.4 Z" fill="#fafafa"/>
<path d="M917.3 113 V133 H902.4 M902.4 123.2 H917.3" fill="none" stroke="#3b3b3b" stroke-width="1.2"/>
<path d="M919.4 105.5 L926.9 113 L940 99.9" fill="none" stroke="#22a043" stroke-width="1.3"/>
<path d="M960.4 102.8 H985.5 L990.2 107.6 L985.5 112.6 H960.4 Z" fill="#83bce9"/>
<path d="M960.4 103.2 H985 M960.4 112.2 H985" stroke="#0f6cbd" stroke-width="1.3"/>
<path d="M960.4 112.8 H975.2 V133.2 H960.4 Z" fill="#fafafa"/>
<path d="M975.2 113 V133 H960.4 M960.4 123.2 H975.2" fill="none" stroke="#3b3b3b" stroke-width="1.2"/>
<path d="M988.4 101.2 L1000.8 113.8 M1000.8 101.2 L988.4 113.8" stroke="#e8393a" stroke-width="1.3"/>
<path d="M1019.2 100.4 H1054.6 V107.4 L1041.2 120.6 V137 H1032.8 V120.6 L1019.2 107.4 Z" fill="#fafafa" stroke="#3b3b3b" stroke-width="1.2" stroke-linejoin="miter"/>
<path d="M1093.5 107.60000000000001 L1097.8 98.5 L1102.1 107.60000000000001 M1095.2 104.4 H1100.4" fill="none" stroke="#1a86d8" stroke-width="1.6"/>
<path d="M1093.6 111.0 H1100.6 L1093.8 118.1 H1100.9" fill="none" stroke="#3b3b3b" stroke-width="1.4"/>
<path d="M1093.6 134.1 H1100.6 L1093.8 141.20000000000002 H1100.9" fill="none" stroke="#3b3b3b" stroke-width="1.4"/>
<path d="M1093.5 154.4 L1097.8 145.3 L1102.1 154.4 M1095.2 151.2 H1100.4" fill="none" stroke="#1a86d8" stroke-width="1.6"/>
<path d="M1109.8 98.2 V118.4 M1105.4 114 L1109.8 118.4 L1114.2 114" fill="none" stroke="#505050" stroke-width="1.2"/>
<path d="M1109.8 133.2 V154.4 M1105.4 150 L1109.8 154.4 L1114.2 150" fill="none" stroke="#505050" stroke-width="1.2"/>
<path d="M1175.6 129.6 V125 Q1175.6 121.5 1172.5 118 Q1168.3 113.5 1168.3 111.2 A12.6 12.6 0 1 1 1193.5 111.2 Q1193.5 113.5 1189.3 118 Q1186.2 121.5 1186.2 125 V129.6 Z" fill="#fafafa" stroke="#3b3b3b" stroke-width="1.2"/>
<rect x="1175.6" y="129.6" width="10.6" height="4.6" fill="#fafafa" stroke="#3b3b3b" stroke-width="1.2"/>
<line x1="1176.4" y1="136.9" x2="1185.4" y2="136.9" stroke="#6a6a6a" stroke-width="1.2"/>
<rect x="1258.5" y="100.5" width="24" height="24" fill="#fafafa" stroke="#3b3b3b" stroke-width="1.2"/>
<rect x="1259.0" y="101.0" width="23" height="3" fill="#c6c6c6"/>
<line x1="1258.5" y1="104.5" x2="1282.5" y2="104.5" stroke="#3b3b3b" stroke-width="1.2"/>
<line x1="1266.5" y1="104.5" x2="1266.5" y2="124.5" stroke="#7a7a7a" stroke-width="1.2"/>
<line x1="1274.5" y1="104.5" x2="1274.5" y2="124.5" stroke="#7a7a7a" stroke-width="1.2"/>
<line x1="1258.5" y1="111.5" x2="1282.5" y2="111.5" stroke="#7a7a7a" stroke-width="1.2"/>
<line x1="1258.5" y1="117.5" x2="1282.5" y2="117.5" stroke="#7a7a7a" stroke-width="1.2"/>
<rect x="1268" y="110" width="29" height="29" fill="#fff"/>
<rect x="1270.5" y="112.5" width="25" height="25" fill="#fafafa" stroke="#3b3b3b" stroke-width="1.2"/>
<rect x="1271.0" y="113.0" width="24" height="3" fill="#c6c6c6"/>
<line x1="1270.5" y1="116.5" x2="1295.5" y2="116.5" stroke="#3b3b3b" stroke-width="1.2"/>
<line x1="1278.5" y1="116.5" x2="1278.5" y2="137.5" stroke="#7a7a7a" stroke-width="1.2"/>
<line x1="1287.5" y1="116.5" x2="1287.5" y2="137.5" stroke="#7a7a7a" stroke-width="1.2"/>
<line x1="1270.5" y1="123.5" x2="1295.5" y2="123.5" stroke="#7a7a7a" stroke-width="1.2"/>
<line x1="1270.5" y1="130.5" x2="1295.5" y2="130.5" stroke="#7a7a7a" stroke-width="1.2"/>
<path d="M1266.8 123 L1276.6 131.3 L1266.8 139.8 Z" fill="#fff" stroke="#fff" stroke-width="4"/>
<path d="M1255.2 131.3 H1276.5 M1267.5 123.6 L1276.6 131.3 L1267.5 139.2" fill="none" stroke="#1a86d8" stroke-width="1.3"/>
<rect x="1344.5" y="100.8" width="3" height="3" fill="none" stroke="#3b3b3b" stroke-width="1.5"/>
<rect x="1344.5" y="106.0" width="3" height="3" fill="none" stroke="#3b3b3b" stroke-width="1.5"/>
<rect x="1344.5" y="111.2" width="3" height="3" fill="none" stroke="#3b3b3b" stroke-width="1.5"/>
<rect x="1349.7" y="100.8" width="3" height="3" fill="none" stroke="#3b3b3b" stroke-width="1.5"/>
<rect x="1349.7" y="106.0" width="3" height="3" fill="none" stroke="#3b3b3b" stroke-width="1.5"/>
<rect x="1349.7" y="111.2" width="3" height="3" fill="none" stroke="#3b3b3b" stroke-width="1.5"/>
<rect x="1354.9" y="100.8" width="3" height="3" fill="none" stroke="#3b3b3b" stroke-width="1.5"/>
<rect x="1354.9" y="106.0" width="3" height="3" fill="none" stroke="#3b3b3b" stroke-width="1.5"/>
<rect x="1354.9" y="111.2" width="3" height="3" fill="none" stroke="#3b3b3b" stroke-width="1.5"/>
<text x="1360.6" y="114.3" font-family="Liberation Sans" font-weight="700" font-size="9.2" fill="#333">CDM</text>
<rect x="1363.5" y="120.6" width="17.6" height="16.2" fill="#fafafa" stroke="#3b3b3b" stroke-width="1.2"/>
<path d="M1366.2 129.6 L1370 133 L1377.8 125.4" fill="none" stroke="#22a043" stroke-width="1.3"/>
<path d="M1345.6 116 V121 Q1345.6 129.6 1354 129.6 H1362.4 M1355.6 123 L1362.4 129.6 L1355.6 136.4" fill="none" stroke="#1a86d8" stroke-width="1.2"/>
<path d="M1442.9 102.4 C1441.50 99.60 1437.00 99.30 1435.00 100.80 C1433.30 101.80 1432.80 103.60 1432.60 105.00 C1428.30 106.20 1426.30 110.50 1427.80 113.20 C1424.30 116.20 1424.30 122.50 1427.60 125.20 C1427.00 128.60 1429.40 131.00 1432.30 131.60 C1432.70 135.00 1435.30 136.80 1438.00 136.80 C1440.50 136.80 1442.40 136.60 1442.90 135.80 C1443.40 136.60 1445.30 136.80 1447.80 136.80 C1450.50 136.80 1453.10 135.00 1453.50 131.60 C1456.40 131.00 1458.80 128.60 1458.20 125.20 C1461.50 122.50 1461.50 116.20 1458.00 113.20 C1459.50 110.50 1457.50 106.20 1453.20 105.00 C1453.00 103.60 1452.50 101.80 1450.80 100.80 C1448.80 99.30 1444.30 99.60 1442.90 102.40 Z" fill="#fafafa" stroke="#3b3b3b" stroke-width="1.25" stroke-linejoin="round"/>
<path d="M1442.9 102.4 V135.8" stroke="#3b3b3b" stroke-width="1.25"/>
<path d="M1437.4 109.7 V116.4 M1432 116.4 H1442.9 M1434.7 125.9 H1442.9 M1442.9 111 H1451 M1442.9 119.3 H1453.8 M1448.2 119.3 V127.4" fill="none" stroke="#3b3b3b" stroke-width="1.15"/>
<circle cx="1437.4" cy="109.7" r="1.35" fill="#3b3b3b"/>
<circle cx="1432" cy="116.4" r="1.35" fill="#3b3b3b"/>
<circle cx="1434.7" cy="125.9" r="1.35" fill="#3b3b3b"/>
<circle cx="1451" cy="111" r="1.35" fill="#3b3b3b"/>
<circle cx="1453.8" cy="119.3" r="1.35" fill="#3b3b3b"/>
<circle cx="1448.2" cy="127.4" r="1.35" fill="#3b3b3b"/>
<path d="M1512.5 98.6 H1519.6 V118.6 H1504.2 V112.2" fill="none" stroke="#3b3b3b" stroke-width="1.1"/>
<rect x="1504.7" y="104" width="14.4" height="14.1" fill="#fafafa"/><rect x="1510" y="99.2" width="9.1" height="6" fill="#fafafa"/>
<path d="M1512.5 98.6 H1519.6 V118.6 H1504.2 V112.2" fill="none" stroke="#3b3b3b" stroke-width="1.1"/>
<path d="M1509.8 107 L1512.3 102.7 H1515.8 V107 Z" fill="#83bce9" stroke="#0f6cbd" stroke-width="1.1" stroke-linejoin="round"/>
<path d="M1508 109.5 H1512.6" stroke="#555" stroke-width="1.1"/>
<rect x="1508.3" y="111.6" width="7.4" height="3.6" fill="none" stroke="#7a7a7a" stroke-width="1.2"/>
<path d="M1505.4 98.5 H1510 L1508 102.6 H1510.1 L1501.6 110.4 L1503.9 104.6 H1501.6 Z" fill="#f5b547" stroke="#e3700d" stroke-width="1.1" stroke-linejoin="round"/>
<g transform="translate(1469.2 939.2) scale(1.0)" fill="none" stroke="#3b3b3b" stroke-width="1.10" stroke-linejoin="round"><path d="M4.5 17 V3.2 Q4.5 0.6 7 0.6 H17.4 V17 Z" fill="#fafafa" stroke="none"/><path d="M1 17 H14 V18.8 Q14 20.2 12.6 20.2 H2.5 Q1 20.2 1 18.6 Z" fill="#fafafa" stroke="none"/><path d="M4.5 17 V3.2 Q4.5 0.6 7 0.6 H18.2 Q20.5 0.6 20.5 3 V5.5 H17.4"/><path d="M17.4 1.2 V18 Q17.4 20.4 15 20.4 H2.5 Q0.6 20.4 0.6 18.6 V17.6 Q0.6 16.6 2 16.6 H14 V18.8"/></g>
<rect x="1567.8" y="939.8" width="7" height="5.4" fill="#fafafa" stroke="#3b3b3b" stroke-width="1.1"/>
<rect x="1567.8" y="953.6" width="7" height="5.4" fill="#fafafa" stroke="#3b3b3b" stroke-width="1.1"/>
<path d="M1574.8 942.5 H1578.5 V956.3 H1574.8 M1578.5 949.4 H1581" fill="none" stroke="#3b3b3b" stroke-width="1.1"/>
<rect x="1581.4" y="946.6" width="6.6" height="5.8" fill="#83bce9" stroke="#1a86d8" stroke-width="1.2"/>
<rect x="1629.5" y="939.5" width="20" height="20" fill="#fafafa" stroke="#3b3b3b" stroke-width="1.1"/>
<rect x="1630.0" y="940.0" width="19" height="3" fill="#c6c6c6"/>
<line x1="1629.5" y1="943.5" x2="1649.5" y2="943.5" stroke="#3b3b3b" stroke-width="1.1"/>
<line x1="1636.5" y1="943.5" x2="1636.5" y2="959.5" stroke="#7a7a7a" stroke-width="1.1"/>
<line x1="1642.5" y1="943.5" x2="1642.5" y2="959.5" stroke="#7a7a7a" stroke-width="1.1"/>
<line x1="1629.5" y1="947.5" x2="1649.5" y2="947.5" stroke="#7a7a7a" stroke-width="1.1"/>
<line x1="1629.5" y1="951.5" x2="1649.5" y2="951.5" stroke="#7a7a7a" stroke-width="1.1"/>
<line x1="1629.5" y1="955.5" x2="1649.5" y2="955.5" stroke="#7a7a7a" stroke-width="1.1"/>
<rect x="1677.5" y="939.8" width="21" height="19.6" fill="#fafafa" stroke="#3b3b3b" stroke-width="1.1"/>
<rect x="1678" y="940.3" width="20" height="2.6" fill="#c6c6c6"/>
<path d="M1677.5 943.3 H1698.5 M1684.5 943.3 V959.4 M1691.5 943.3 V959.4" stroke="#3b3b3b" stroke-width="1.1"/>
<path d="M1442.6 512.6 V526 Q1442.6 529.2 1450 529.2 Q1457.4 529.2 1457.4 526 V512.6" fill="#f8d98c" stroke="#d9690f" stroke-width="1.3"/>
<ellipse cx="1450" cy="512.6" rx="7.4" ry="3" fill="#f8d98c" stroke="#d9690f" stroke-width="1.3"/>
<path d="M1652.79 519.60 L1652.79 519.78 L1652.78 519.95 L1652.76 520.13 L1652.74 520.30 L1652.70 520.47 L1652.65 520.65 L1652.59 520.81 L1652.51 520.98 L1652.41 521.14 L1652.28 521.29 L1652.12 521.43 L1651.92 521.56 L1651.69 521.68 L1651.42 521.77 L1651.13 521.86 L1650.83 521.93 L1650.55 522.00 L1650.28 522.06 L1650.05 522.13 L1649.85 522.20 L1649.69 522.28 L1649.55 522.37 L1649.43 522.46 L1649.33 522.55 L1649.24 522.65 L1649.16 522.75 L1649.09 522.85 L1649.02 522.96 L1648.95 523.07 L1648.89 523.17 L1648.83 523.28 L1648.77 523.39 L1648.71 523.50 L1648.66 523.62 L1648.61 523.74 L1648.57 523.87 L1648.54 524.00 L1648.52 524.15 L1648.52 524.31 L1648.53 524.49 L1648.57 524.70 L1648.62 524.93 L1648.70 525.20 L1648.79 525.48 L1648.87 525.77 L1648.94 526.07 L1648.99 526.35 L1649.01 526.61 L1649.00 526.84 L1648.95 527.05 L1648.89 527.24 L1648.80 527.41 L1648.70 527.56 L1648.58 527.70 L1648.46 527.82 L1648.33 527.94 L1648.19 528.05 L1648.04 528.15 L1647.90 528.25 L1647.75 528.34 L1647.59 528.43 L1647.43 528.50 L1647.27 528.58 L1647.11 528.64 L1646.94 528.70 L1646.77 528.74 L1646.59 528.77 L1646.41 528.79 L1646.22 528.78 L1646.03 528.74 L1645.82 528.67 L1645.61 528.57 L1645.40 528.42 L1645.18 528.24 L1644.96 528.03 L1644.75 527.81 L1644.55 527.59 L1644.36 527.40 L1644.18 527.23 L1644.02 527.10 L1643.87 526.99 L1643.73 526.92 L1643.59 526.86 L1643.46 526.82 L1643.33 526.79 L1643.20 526.77 L1643.08 526.76 L1642.95 526.75 L1642.82 526.75 L1642.70 526.75 L1642.58 526.75 L1642.45 526.75 L1642.32 526.76 L1642.20 526.77 L1642.07 526.79 L1641.94 526.82 L1641.81 526.86 L1641.67 526.92 L1641.53 526.99 L1641.38 527.10 L1641.22 527.23 L1641.04 527.40 L1640.85 527.59 L1640.65 527.81 L1640.44 528.03 L1640.22 528.24 L1640.00 528.42 L1639.79 528.57 L1639.58 528.67 L1639.37 528.74 L1639.18 528.78 L1638.99 528.79 L1638.81 528.77 L1638.63 528.74 L1638.46 528.70 L1638.29 528.64 L1638.13 528.58 L1637.97 528.50 L1637.81 528.43 L1637.65 528.34 L1637.50 528.25 L1637.36 528.15 L1637.21 528.05 L1637.07 527.94 L1636.94 527.82 L1636.82 527.70 L1636.70 527.56 L1636.60 527.41 L1636.51 527.24 L1636.45 527.05 L1636.40 526.84 L1636.39 526.61 L1636.41 526.35 L1636.46 526.07 L1636.53 525.77 L1636.61 525.48 L1636.70 525.20 L1636.78 524.93 L1636.83 524.70 L1636.87 524.49 L1636.88 524.31 L1636.88 524.15 L1636.86 524.00 L1636.83 523.87 L1636.79 523.74 L1636.74 523.62 L1636.69 523.50 L1636.63 523.39 L1636.57 523.28 L1636.51 523.17 L1636.45 523.07 L1636.38 522.96 L1636.31 522.85 L1636.24 522.75 L1636.16 522.65 L1636.07 522.55 L1635.97 522.46 L1635.85 522.37 L1635.71 522.28 L1635.55 522.20 L1635.35 522.13 L1635.12 522.06 L1634.85 522.00 L1634.57 521.93 L1634.27 521.86 L1633.98 521.77 L1633.71 521.68 L1633.48 521.56 L1633.28 521.43 L1633.12 521.29 L1632.99 521.14 L1632.89 520.98 L1632.81 520.81 L1632.75 520.65 L1632.70 520.47 L1632.66 520.30 L1632.64 520.13 L1632.62 519.95 L1632.61 519.78 L1632.61 519.60 L1632.61 519.42 L1632.62 519.25 L1632.64 519.07 L1632.66 518.90 L1632.70 518.73 L1632.75 518.55 L1632.81 518.39 L1632.89 518.22 L1632.99 518.06 L1633.12 517.91 L1633.28 517.77 L1633.48 517.64 L1633.71 517.52 L1633.98 517.43 L1634.27 517.34 L1634.57 517.27 L1634.85 517.20 L1635.12 517.14 L1635.35 517.07 L1635.55 517.00 L1635.71 516.92 L1635.85 516.83 L1635.97 516.74 L1636.07 516.65 L1636.16 516.55 L1636.24 516.45 L1636.31 516.35 L1636.38 516.24 L1636.45 516.13 L1636.51 516.03 L1636.57 515.92 L1636.63 515.81 L1636.69 515.70 L1636.74 515.58 L1636.79 515.46 L1636.83 515.33 L1636.86 515.20 L1636.88 515.05 L1636.88 514.89 L1636.87 514.71 L1636.83 514.50 L1636.78 514.27 L1636.70 514.00 L1636.61 513.72 L1636.53 513.43 L1636.46 513.13 L1636.41 512.85 L1636.39 512.59 L1636.40 512.36 L1636.45 512.15 L1636.51 511.96 L1636.60 511.79 L1636.70 511.64 L1636.82 511.50 L1636.94 511.38 L1637.07 511.26 L1637.21 511.15 L1637.36 511.05 L1637.50 510.95 L1637.65 510.86 L1637.81 510.77 L1637.97 510.70 L1638.13 510.62 L1638.29 510.56 L1638.46 510.50 L1638.63 510.46 L1638.81 510.43 L1638.99 510.41 L1639.18 510.42 L1639.37 510.46 L1639.58 510.53 L1639.79 510.63 L1640.00 510.78 L1640.22 510.96 L1640.44 511.17 L1640.65 511.39 L1640.85 511.61 L1641.04 511.80 L1641.22 511.97 L1641.38 512.10 L1641.53 512.21 L1641.67 512.28 L1641.81 512.34 L1641.94 512.38 L1642.07 512.41 L1642.20 512.43 L1642.32 512.44 L1642.45 512.45 L1642.58 512.45 L1642.70 512.45 L1642.82 512.45 L1642.95 512.45 L1643.08 512.44 L1643.20 512.43 L1643.33 512.41 L1643.46 512.38 L1643.59 512.34 L1643.73 512.28 L1643.87 512.21 L1644.02 512.10 L1644.18 511.97 L1644.36 511.80 L1644.55 511.61 L1644.75 511.39 L1644.96 511.17 L1645.18 510.96 L1645.40 510.78 L1645.61 510.63 L1645.82 510.53 L1646.03 510.46 L1646.22 510.42 L1646.41 510.41 L1646.59 510.43 L1646.77 510.46 L1646.94 510.50 L1647.11 510.56 L1647.27 510.62 L1647.43 510.70 L1647.59 510.77 L1647.75 510.86 L1647.90 510.95 L1648.04 511.05 L1648.19 511.15 L1648.33 511.26 L1648.46 511.38 L1648.58 511.50 L1648.70 511.64 L1648.80 511.79 L1648.89 511.96 L1648.95 512.15 L1649.00 512.36 L1649.01 512.59 L1648.99 512.85 L1648.94 513.13 L1648.87 513.43 L1648.79 513.72 L1648.70 514.00 L1648.62 514.27 L1648.57 514.50 L1648.53 514.71 L1648.52 514.89 L1648.52 515.05 L1648.54 515.20 L1648.57 515.33 L1648.61 515.46 L1648.66 515.58 L1648.71 515.70 L1648.77 515.81 L1648.83 515.92 L1648.89 516.03 L1648.95 516.13 L1649.02 516.24 L1649.09 516.35 L1649.16 516.45 L1649.24 516.55 L1649.33 516.65 L1649.43 516.74 L1649.55 516.83 L1649.69 516.92 L1649.85 517.00 L1650.05 517.07 L1650.28 517.14 L1650.55 517.20 L1650.83 517.27 L1651.13 517.34 L1651.42 517.43 L1651.69 517.52 L1651.92 517.64 L1652.12 517.77 L1652.28 517.91 L1652.41 518.06 L1652.51 518.22 L1652.59 518.39 L1652.65 518.55 L1652.70 518.73 L1652.74 518.90 L1652.76 519.07 L1652.78 519.25 L1652.79 519.42 Z" fill="none" stroke="#3b3b3b" stroke-width="1.2" stroke-linejoin="round"/>
<circle cx="1642.7" cy="519.6" r="3.3" fill="none" stroke="#3b3b3b" stroke-width="1.2"/>
<path d="M1663.4 513.8 V525.6 Q1663.4 528.6 1670 528.6" fill="none" stroke="#0e7a7a" stroke-width="1.3"/>
<path d="M1676.6 513.8 V517" fill="none" stroke="#0e7a7a" stroke-width="1.3"/>
<ellipse cx="1670" cy="513.8" rx="6.6" ry="2.9" fill="none" stroke="#0e7a7a" stroke-width="1.3"/>
<path d="M1677 518.6 L1672.4 524.8 H1675.4 L1672.8 530.4 L1680.8 522.8 H1677.4 L1680.2 518.6 Z" fill="none" stroke="#0e7a7a" stroke-width="1.1" stroke-linejoin="round"/>
<path d="M1414.8 541.8 L1429.6 556.6 M1429.6 541.8 L1414.8 556.6" stroke="#3b3b3b" stroke-width="1.3"/>
<g transform="translate(1439.2 538.4) scale(1.0)" fill="none" stroke="#3b3b3b" stroke-width="1.10" stroke-linejoin="round"><path d="M4.5 17 V3.2 Q4.5 0.6 7 0.6 H17.4 V17 Z" fill="#fafafa" stroke="none"/><path d="M1 17 H14 V18.8 Q14 20.2 12.6 20.2 H2.5 Q1 20.2 1 18.6 Z" fill="#fafafa" stroke="none"/><path d="M4.5 17 V3.2 Q4.5 0.6 7 0.6 H18.2 Q20.5 0.6 20.5 3 V5.5 H17.4"/><path d="M17.4 1.2 V18 Q17.4 20.4 15 20.4 H2.5 Q0.6 20.4 0.6 18.6 V17.6 Q0.6 16.6 2 16.6 H14 V18.8"/></g>
<rect x="76.5" y="364.5" width="21" height="20" fill="#fafafa" stroke="#3b3b3b" stroke-width="1.1"/>
<rect x="77.0" y="365.0" width="20" height="3" fill="#c6c6c6"/>
<line x1="76.5" y1="368.5" x2="97.5" y2="368.5" stroke="#3b3b3b" stroke-width="1.1"/>
<line x1="83.5" y1="368.5" x2="83.5" y2="384.5" stroke="#7a7a7a" stroke-width="1.1"/>
<line x1="90.5" y1="368.5" x2="90.5" y2="384.5" stroke="#7a7a7a" stroke-width="1.1"/>
<line x1="76.5" y1="372.5" x2="97.5" y2="372.5" stroke="#7a7a7a" stroke-width="1.1"/>
<line x1="76.5" y1="376.5" x2="97.5" y2="376.5" stroke="#7a7a7a" stroke-width="1.1"/>
<line x1="76.5" y1="380.5" x2="97.5" y2="380.5" stroke="#7a7a7a" stroke-width="1.1"/>
<path d="M108.9 371.6 L112.1 369 V380.9" fill="none" stroke="#2b2b2b" stroke-width="1.2" stroke-linejoin="round"/>
<path d="M116.3 366.2 Q117.4 363.9 119.6 363.9 Q122.7 363.9 122.7 366.9 Q122.7 368.9 120.6 370.9 L116.2 374.9 H123.1" fill="none" stroke="#2b2b2b" stroke-width="1.2"/>
<path d="M124.5 373.4 Q125.6 372.1 127.3 372.1 Q130.1 372.1 130.1 374.7 Q130.1 377.1 127 377.1 Q130.5 377.1 130.5 380 Q130.5 382.9 127.2 382.9 Q125.3 382.9 124.3 381.6" fill="none" stroke="#2b2b2b" stroke-width="1.2"/>
<path d="M267.4 380.6 L271.4 370.4 L275.4 380.6 M268.9 377 H273.9" fill="none" stroke="#333" stroke-width="1.35"/>
<path d="M275.6 374.5 V364.5 H278.4 Q281 364.5 281 367 Q281 369.2 278.4 369.2 H275.6 M278.4 369.2 Q281.5 369.2 281.5 371.9 Q281.5 374.5 278.6 374.5 H275.6" fill="none" stroke="#333" stroke-width="1.35"/>
<path d="M287 375.3 Q285.6 374.3 284 374.3 Q280.2 374.3 280.2 379.3 Q280.2 384.3 284 384.3 Q285.8 384.3 287 383.4" fill="none" stroke="#333" stroke-width="1.35"/>
<path d="M157.5 267.6 Q158.6 270.2 161 268.6 Q163.6 266.6 165 259 L166.6 251.5 Q168.4 245.3 171.8 245.3 Q174.3 245.3 173.8 247.6" fill="none" stroke="#2b2b2b" stroke-width="1.5" stroke-linecap="round"/>
<circle cx="157.9" cy="267.9" r="1.2" fill="#2b2b2b"/><circle cx="173.3" cy="247.3" r="1.2" fill="#2b2b2b"/>
<path d="M162.8 252.9 H170.1" stroke="#2b2b2b" stroke-width="1.2"/>
<path d="M163.2 262 Q164.4 258 165.2 254.5 L166.4 250" fill="none" stroke="#2b2b2b" stroke-width="2.3" stroke-linecap="round"/>
<path d="M168.3 257.3 Q170.8 255.9 172 259.6 L174 264.3 Q175.2 266.9 177.3 264" fill="none" stroke="#2b2b2b" stroke-width="1.3" stroke-linecap="round"/>
<path d="M171.6 258.6 L174.2 264.4" stroke="#2b2b2b" stroke-width="2" stroke-linecap="round"/>
<path d="M177.6 257.2 Q175.7 255.9 173.2 259.4 L170.6 263.6 Q169.3 266.1 167.9 264.9" fill="none" stroke="#2b2b2b" stroke-width="1.2" stroke-linecap="round"/>
</svg>
</body></html>
